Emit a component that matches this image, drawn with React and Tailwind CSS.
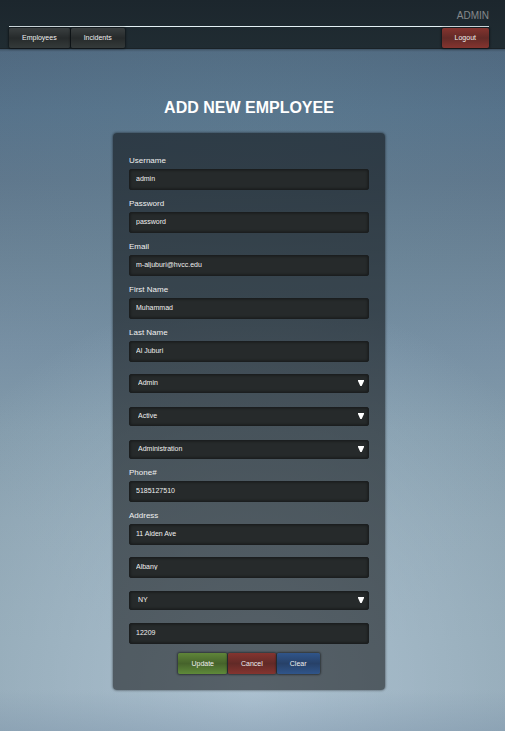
import React from "react";

const PAGE_BG =
  "bg-[linear-gradient(to_bottom,rgba(122,146,168,0)_690px,rgba(122,146,168,0.4)_731px),radial-gradient(ellipse_75%_55%_at_50%_95%,rgba(186,206,222,0.7),rgba(184,204,220,0)),radial-gradient(ellipse_60%_60%_at_50%_35%,rgba(110,150,165,0.18),rgba(110,150,165,0)),linear-gradient(to_bottom,#4c6274_0px,#506980_50px,#56728a_110px,#5f778c_180px,#6b8396_260px,#7890a4_350px,#839bab_430px,#8aa1af_520px,#8ea5b2_640px,#8fa5b3_731px)]";

const CONTROL =
  "block w-full appearance-none rounded-[2px] border border-[#1b1e1f] bg-[#262a2b] text-[7px] text-[#f0f0f0] shadow-[inset_0_0_3px_rgba(0,0,0,0.5)] outline-none";

const BUTTON =
  "rounded-[2px] px-[13px] text-[7px] leading-[10px] text-[#f0f0f0] shadow-[0_0_2px_1px_rgba(0,0,0,0.45)]";

const RED = "bg-[linear-gradient(#84342f,#622a27_50%,#84342f)]";

function Input({ id, ...rest }) {
  return <input id={id} className={`${CONTROL} h-[21px] px-[6px] pb-[2px]`} {...rest} />;
}

function Field({ id, label, ...rest }) {
  return (
    <div>
      <label htmlFor={id} className="block pt-[9px] pb-[3px] text-[8px] leading-[10px] text-[#f0f0f0]">
        {label}
      </label>
      <Input id={id} {...rest} />
    </div>
  );
}

function Select({ label, options }) {
  return (
    <div className="relative">
      <select aria-label={label} className={`${CONTROL} h-[19px] pr-5 pl-2`}>
        {options.map((o) => (
          <option key={o}>{o}</option>
        ))}
      </select>
      <svg
        className="pointer-events-none absolute top-[6px] right-[5px] h-[6px] w-[6px] fill-white"
        viewBox="0 0 6 6"
        aria-hidden="true"
      >
        <path d="M0 0H6V1L3.7 6H2.3L0 1Z" />
      </svg>
    </div>
  );
}

export default function App() {
  return (
    <div className={`min-h-screen font-['Liberation_Sans',Arial,sans-serif] ${PAGE_BG}`}>
      <header className="border-b border-[#1a2227] bg-[linear-gradient(#1c262d,#202c32)] pr-4 pl-[9px] shadow-[0_0_2px_1px_rgba(0,0,0,0.3)]">
        <div className="flex justify-end border-b border-[#e4f1f5] pt-[10px] pb-1 text-[10px] leading-3 text-[#85898b]">
          ADMIN
        </div>
        <nav className="flex gap-px pt-px">
          <button type="button" className={`${BUTTON} h-5 bg-[linear-gradient(#3a3f40,#262a2b_50%,#343a3a)]`}>
            Employees
          </button>
          <button type="button" className={`${BUTTON} h-5 bg-[linear-gradient(#3a3f40,#262a2b_50%,#343a3a)]`}>
            Incidents
          </button>
          <button type="button" className={`${BUTTON} ml-auto h-5 ${RED}`}>
            Logout
          </button>
        </nav>
      </header>

      <main className="flex flex-col items-center pt-[49px] pr-4 pb-10 pl-[9px]">
        <h1 className="text-[16px] leading-5 font-bold text-white">ADD NEW EMPLOYEE</h1>
        <form
          className="mt-[15px] w-[272px] rounded-[4px] bg-black/50 px-4 pt-[14px] pb-4 shadow-[0_0_2px_1px_rgba(0,0,0,0.3)]"
          onSubmit={(e) => e.preventDefault()}
        >
          <Field id="username" label="Username" defaultValue="admin" />
          <Field id="password" label="Password" defaultValue="password" />
          <Field id="email" label="Email" defaultValue="m-aljuburi@hvcc.edu" />
          <Field id="first-name" label="First Name" defaultValue="Muhammad" />
          <Field id="last-name" label="Last Name" defaultValue="Al Juburi" />

          <div className="mt-3 flex flex-col gap-[14px]">
            <Select label="Role" options={["Admin"]} />
            <Select label="Status" options={["Active"]} />
            <Select label="Department" options={["Administration"]} />
          </div>

          <Field id="phone" label="Phone#" defaultValue="5185127510" />
          <Field id="address" label="Address" defaultValue="11 Alden Ave" />

          <div className="mt-3 flex flex-col gap-[13px]">
            <Input id="city" aria-label="City" defaultValue="Albany" />
            <Select label="State" options={["NY"]} />
            <Input id="zip" aria-label="Zip code" defaultValue="12209" />
          </div>

          <div className="mt-[9px] flex justify-center gap-px">
            <button type="submit" className={`${BUTTON} h-[21px] bg-[linear-gradient(#5f8539,#46632b_50%,#5f8a3a)]`}>
              Update
            </button>
            <button type="button" className={`${BUTTON} h-[21px] ${RED}`}>
              Cancel
            </button>
            <button type="reset" className={`${BUTTON} h-[21px] bg-[linear-gradient(#30558a,#274168_50%,#30558a)]`}>
              Clear
            </button>
          </div>
        </form>
      </main>
    </div>
  );
}
